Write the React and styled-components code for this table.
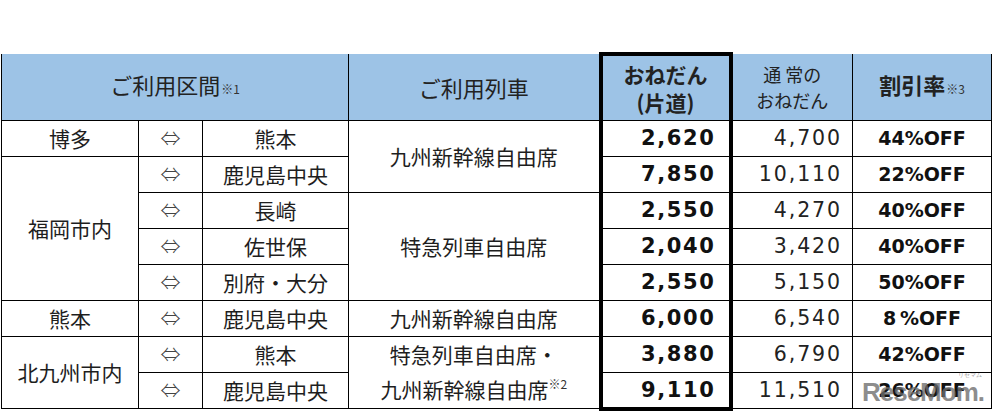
import React from "react";
import styled, { createGlobalStyle, css } from "styled-components";

const Global = createGlobalStyle`
  html, body { margin: 0; padding: 0; background: #fff; }
  body { font-family: "Noto Sans CJK JP", "Noto Sans", sans-serif; color: #1e1e1e; }
`;

const Page = styled.div`
  width: 996px;
  height: 411px;
  padding: 52px 0 0 1px;
  box-sizing: border-box;
  position: relative;
  overflow: hidden;
`;

const Table = styled.table`
  border-collapse: collapse;
  table-layout: fixed;
  width: 990px;
  font-family: "Noto Sans CJK JP", "Noto Sans", sans-serif;
`;

const HeadRow = styled.tr`
  height: 66px;
`;

const BodyRow = styled.tr`
  height: 36px;
`;

const boldCol = css`
  border-left: 4px solid #000;
  border-right: 4px solid #000;
`;

const Th = styled.th`
  background: #9dc3e6;
  border: 1px solid #000;
  border-top: none;
  padding: 0;
  font-weight: ${(p) => (p.$bold ? 700 : 400)};
  font-size: ${(p) => p.$size || 21}px;
  line-height: ${(p) => p.$lh || 28}px;
  color: #222;
  text-align: center;
  vertical-align: middle;
  ${(p) => p.$frame && boldCol}
  ${(p) => p.$frame && "border-top: 4px solid #000;"}
`;

const Note = styled.span`
  font-size: 12px;
  font-weight: 400;
  color: #333;
  margin-left: 1px;
`;

const Td = styled.td`
  border: 1px solid #000;
  padding: 0;
  font-size: 21px;
  line-height: 34px;
  text-align: center;
  vertical-align: middle;
  color: #1e1e1e;
  white-space: nowrap;
`;

const Arrow = styled(Td)`
  font-family: "Noto Sans CJK JP", sans-serif;
  font-size: 20px;
  font-weight: 300;
  color: #444;
`;

const Price = styled(Td)`
  ${boldCol}
  ${(p) => p.$last && "border-bottom: 4px solid #000;"}
  font-family: "DejaVu Sans", sans-serif;
  font-weight: 700;
  font-size: 21px;
  letter-spacing: 1.6px;
  text-align: right;
  padding-right: 13px;
  color: #111;
`;

const Normal = styled(Td)`
  font-family: "DejaVu Sans", sans-serif;
  font-size: 20.5px;
  letter-spacing: 1.9px;
  text-align: right;
  padding-right: 10px;
  color: #222;
`;

const Off = styled(Td)`
  font-family: "DejaVu Sans", sans-serif;
  font-weight: 700;
  font-size: 19px;
  color: #111;
`;

const Train = styled(Td)`
  line-height: 35px;
`;

const Sup = styled.sup`
  font-size: 12px;
  line-height: 0;
  vertical-align: 9px;
  color: #333;
`;

const Watermark = styled.div`
  position: absolute;
  right: 12px;
  bottom: 6px;
  font-family: "Liberation Sans", Arial, sans-serif;
  font-weight: 700;
  font-size: 26px;
  letter-spacing: -1px;
  color: rgba(110, 110, 110, 0.78);
  line-height: 1;
`;

const WatermarkSmall = styled.span`
  position: absolute;
  right: 2px;
  top: -7px;
  font-size: 6px;
  font-weight: 400;
  letter-spacing: 0;
`;

const rows = [
  { price: "2,620", normal: "4,700", off: "44%OFF" },
  { price: "7,850", normal: "10,110", off: "22%OFF" },
  { price: "2,550", normal: "4,270", off: "40%OFF" },
  { price: "2,040", normal: "3,420", off: "40%OFF" },
  { price: "2,550", normal: "5,150", off: "50%OFF" },
  { price: "6,000", normal: "6,540", off: "8\u2009%OFF" },
  { price: "3,880", normal: "6,790", off: "42%OFF" },
  { price: "9,110", normal: "11,510", off: "26%OFF" },
];

const Tail = ({ i }) => (
  <>
    <Price $last={i === rows.length - 1}>{rows[i].price}</Price>
    <Normal>{rows[i].normal}</Normal>
    <Off>{rows[i].off}</Off>
  </>
);

export default function App() {
  return (
    <Page>
      <Global />
      <Table>
        <colgroup>
          <col style={{ width: 137 }} />
          <col style={{ width: 64 }} />
          <col style={{ width: 146 }} />
          <col style={{ width: 252 }} />
          <col style={{ width: 130 }} />
          <col style={{ width: 122 }} />
          <col style={{ width: 139 }} />
        </colgroup>
        <thead>
          <HeadRow>
            <Th colSpan={3} $size={22}>
              ご利用区間<Note>※1</Note>
            </Th>
            <Th $size={22}>ご利用列車</Th>
            <Th $frame $bold $size={21}>
              おねだん
              <br />
              (片道)
            </Th>
            <Th $size={18} $lh={26}>
              通 常の
              <br />
              おねだん
            </Th>
            <Th $bold $size={22}>
              割引率<Note>※3</Note>
            </Th>
          </HeadRow>
        </thead>
        <tbody>
          <BodyRow>
            <Td>博多</Td>
            <Arrow>⇔</Arrow>
            <Td>熊本</Td>
            <Train rowSpan={2}>九州新幹線自由席</Train>
            <Tail i={0} />
          </BodyRow>
          <BodyRow>
            <Td rowSpan={4}>福岡市内</Td>
            <Arrow>⇔</Arrow>
            <Td>鹿児島中央</Td>
            <Tail i={1} />
          </BodyRow>
          <BodyRow>
            <Arrow>⇔</Arrow>
            <Td>長崎</Td>
            <Train rowSpan={3}>特急列車自由席</Train>
            <Tail i={2} />
          </BodyRow>
          <BodyRow>
            <Arrow>⇔</Arrow>
            <Td>佐世保</Td>
            <Tail i={3} />
          </BodyRow>
          <BodyRow>
            <Arrow>⇔</Arrow>
            <Td>別府・大分</Td>
            <Tail i={4} />
          </BodyRow>
          <BodyRow>
            <Td>熊本</Td>
            <Arrow>⇔</Arrow>
            <Td>鹿児島中央</Td>
            <Train>九州新幹線自由席</Train>
            <Tail i={5} />
          </BodyRow>
          <BodyRow>
            <Td rowSpan={2}>北九州市内</Td>
            <Arrow>⇔</Arrow>
            <Td>熊本</Td>
            <Train rowSpan={2}>
              特急列車自由席・
              <br />
              九州新幹線自由席<Sup>※2</Sup>
            </Train>
            <Tail i={6} />
          </BodyRow>
          <BodyRow>
            <Arrow>⇔</Arrow>
            <Td>鹿児島中央</Td>
            <Tail i={7} />
          </BodyRow>
        </tbody>
      </Table>
      <Watermark>
        <WatermarkSmall>リセマム</WatermarkSmall>
        ReseMom.
      </Watermark>
    </Page>
  );
}
